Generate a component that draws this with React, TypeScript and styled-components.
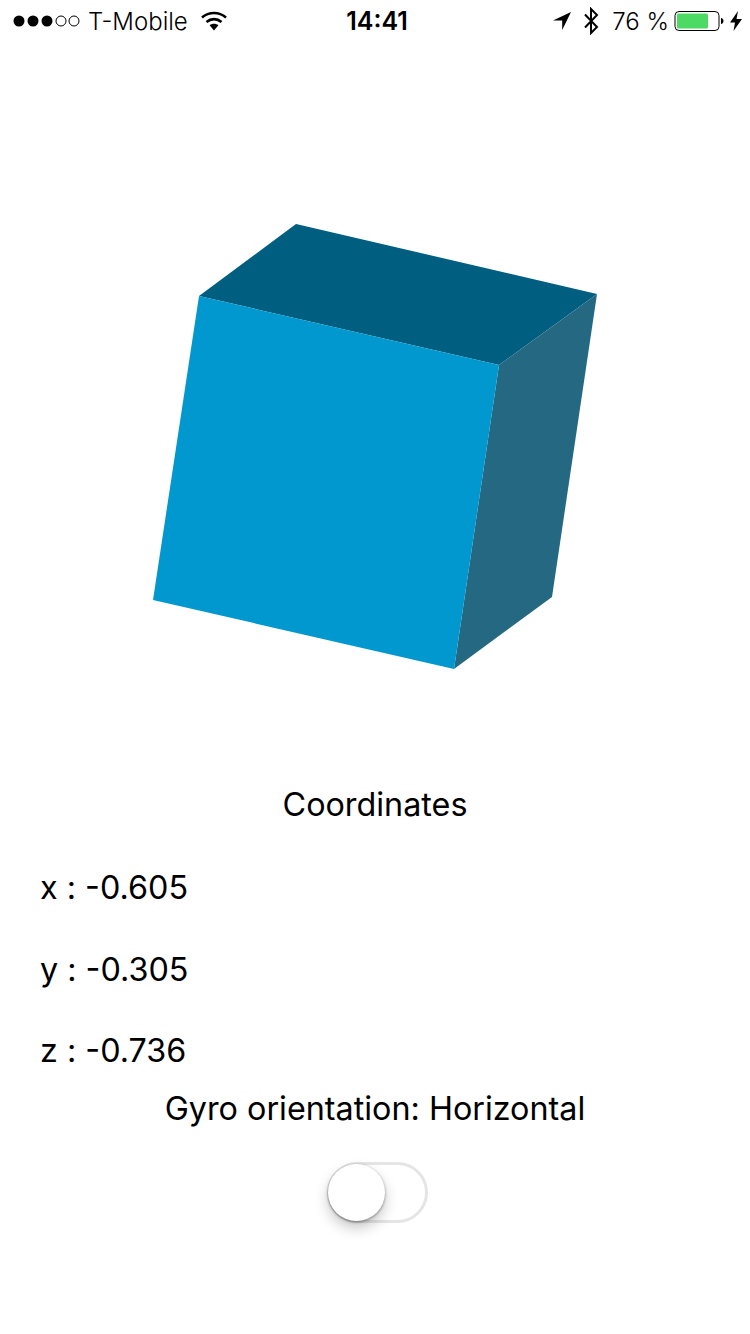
import React from 'react';
import styled, { createGlobalStyle } from 'styled-components';

const GlobalStyle = createGlobalStyle`
  html, body {
    margin: 0;
    padding: 0;
    background: #fff;
  }
`;

const Screen = styled.div`
  width: 750px;
  height: 1334px;
  background: #fff;
  color: #000;
  font-family: Inter, "Liberation Sans", sans-serif;
  overflow: hidden;
`;

const StatusBar = styled.div`
  height: 42px;
  padding: 0 8px 0 12px;
  display: grid;
  grid-template-columns: 1fr auto 1fr;
  align-items: center;
  font-size: 24px;
`;

const StatusLeft = styled.div`
  display: flex;
  align-items: center;
`;

const StatusRight = styled.div`
  display: flex;
  align-items: center;
  justify-content: flex-end;
`;

const Carrier = styled.span`
  margin: 0 13px 0 8px;
  font-weight: 300;
`;

const Clock = styled.span`
  font-size: 25px;
  font-weight: 600;
`;

const Percent = styled.span`
  margin: 0 5px 0 13px;
  font-size: 24px;
  font-weight: 300;
`;

const Scene = styled.svg`
  display: block;
  width: 750px;
  height: 698px;
`;

const Heading = styled.div`
  margin-top: 45px;
  text-align: center;
  font-size: 32.3px;
  line-height: 40px;
`;

const Coords = styled.div`
  margin-top: 43px;
  padding-left: 40px;
  display: flex;
  flex-direction: column;
  gap: 41.5px;
`;

const Coord = styled.div`
  font-size: 32.3px;
  line-height: 40px;
`;

const Orientation = styled.div`
  margin-top: 18px;
  text-align: center;
  font-size: 32.3px;
  line-height: 40px;
`;

const SwitchRow = styled.div`
  margin-top: 33px;
  padding-left: 5px;
  display: flex;
  justify-content: center;
`;

const Track = styled.div`
  position: relative;
  box-sizing: border-box;
  width: 101px;
  height: 61px;
  border: 3px solid #e5e5e5;
  border-radius: 31px;
  background: #fff;
`;

const Knob = styled.div`
  position: absolute;
  left: -2px;
  top: -1px;
  width: 57px;
  height: 57px;
  border-radius: 50%;
  background: #fff;
  box-shadow: 0 1px 3px rgba(0, 0, 0, 0.4), 0 7px 14px rgba(0, 0, 0, 0.22);
`;

function Signal() {
  return (
    <svg width="68" height="14" viewBox="0 0 68 14">
      {[7, 21, 35].map((cx) => (
        <circle key={cx} cx={cx} cy="7" r="5.5" fill="#000" />
      ))}
      {[49, 62].map((cx) => (
        <circle key={cx} cx={cx} cy="7" r="5" fill="none" stroke="#000" strokeWidth="1" />
      ))}
    </svg>
  );
}

function Wifi() {
  return (
    <svg width="26" height="20" viewBox="0 0 26 20">
      <path d="M1 6.5C8 .5 18 .5 25 6.5" fill="none" stroke="#000" strokeWidth="2.6" />
      <path d="M5.5 11C10 7.2 16 7.2 20.5 11" fill="none" stroke="#000" strokeWidth="2.6" />
      <path d="M8.6 14.2C11 12.2 15 12.2 17.4 14.2L13 19.5Z" fill="#000" />
    </svg>
  );
}

function LocationArrow() {
  return (
    <svg width="20" height="20" viewBox="0 0 20 20" style={{ marginRight: 11 }}>
      <path d="M19 1L1 9.6H10.2V19Z" fill="#000" />
    </svg>
  );
}

function Bluetooth() {
  return (
    <svg width="16" height="28" viewBox="0 0 16 28">
      <path
        d="M2 7.5L14 20L8 26V2L14 8L2 20.5"
        fill="none"
        stroke="#000"
        strokeWidth="2"
      />
    </svg>
  );
}

function Battery() {
  return (
    <svg width="50" height="22" viewBox="0 0 50 22">
      <rect x="1" y="1.5" width="44" height="19" rx="4" fill="none" stroke="#000" strokeWidth="1" />
      <rect x="3" y="3.5" width="31" height="15" rx="1.5" fill="#4cd964" />
      <path d="M47 8C48.5 8 49.5 9.5 49.5 11S48.5 14 47 14Z" fill="#000" />
    </svg>
  );
}

function Charging() {
  return (
    <svg width="12" height="20" viewBox="0 0 12 20" style={{ marginLeft: 6 }}>
      <path d="M8 0L0 11.5H5L3.5 20L12 8H6.5Z" fill="#000" />
    </svg>
  );
}

function Cube() {
  return (
    <Scene viewBox="0 42 750 698">
      <polygon points="199,296 296,224 597,294 499,365" fill="#005e80" />
      <polygon points="499,365 597,294 552,597 454,669" fill="#256882" />
      <polygon points="199,296 499,365 454,669 153,600" fill="#0098ce" />
    </Scene>
  );
}

export default function App() {
  return (
    <Screen>
      <GlobalStyle />
      <StatusBar>
        <StatusLeft>
          <Signal />
          <Carrier>T-Mobile</Carrier>
          <Wifi />
        </StatusLeft>
        <Clock>14:41</Clock>
        <StatusRight>
          <LocationArrow />
          <Bluetooth />
          <Percent>76 %</Percent>
          <Battery />
          <Charging />
        </StatusRight>
      </StatusBar>
      <Cube />
      <Heading>Coordinates</Heading>
      <Coords>
        <Coord>x : -0.605</Coord>
        <Coord>y : -0.305</Coord>
        <Coord>z : -0.736</Coord>
      </Coords>
      <Orientation>Gyro orientation: Horizontal</Orientation>
      <SwitchRow>
        <Track>
          <Knob />
        </Track>
      </SwitchRow>
    </Screen>
  );
}
